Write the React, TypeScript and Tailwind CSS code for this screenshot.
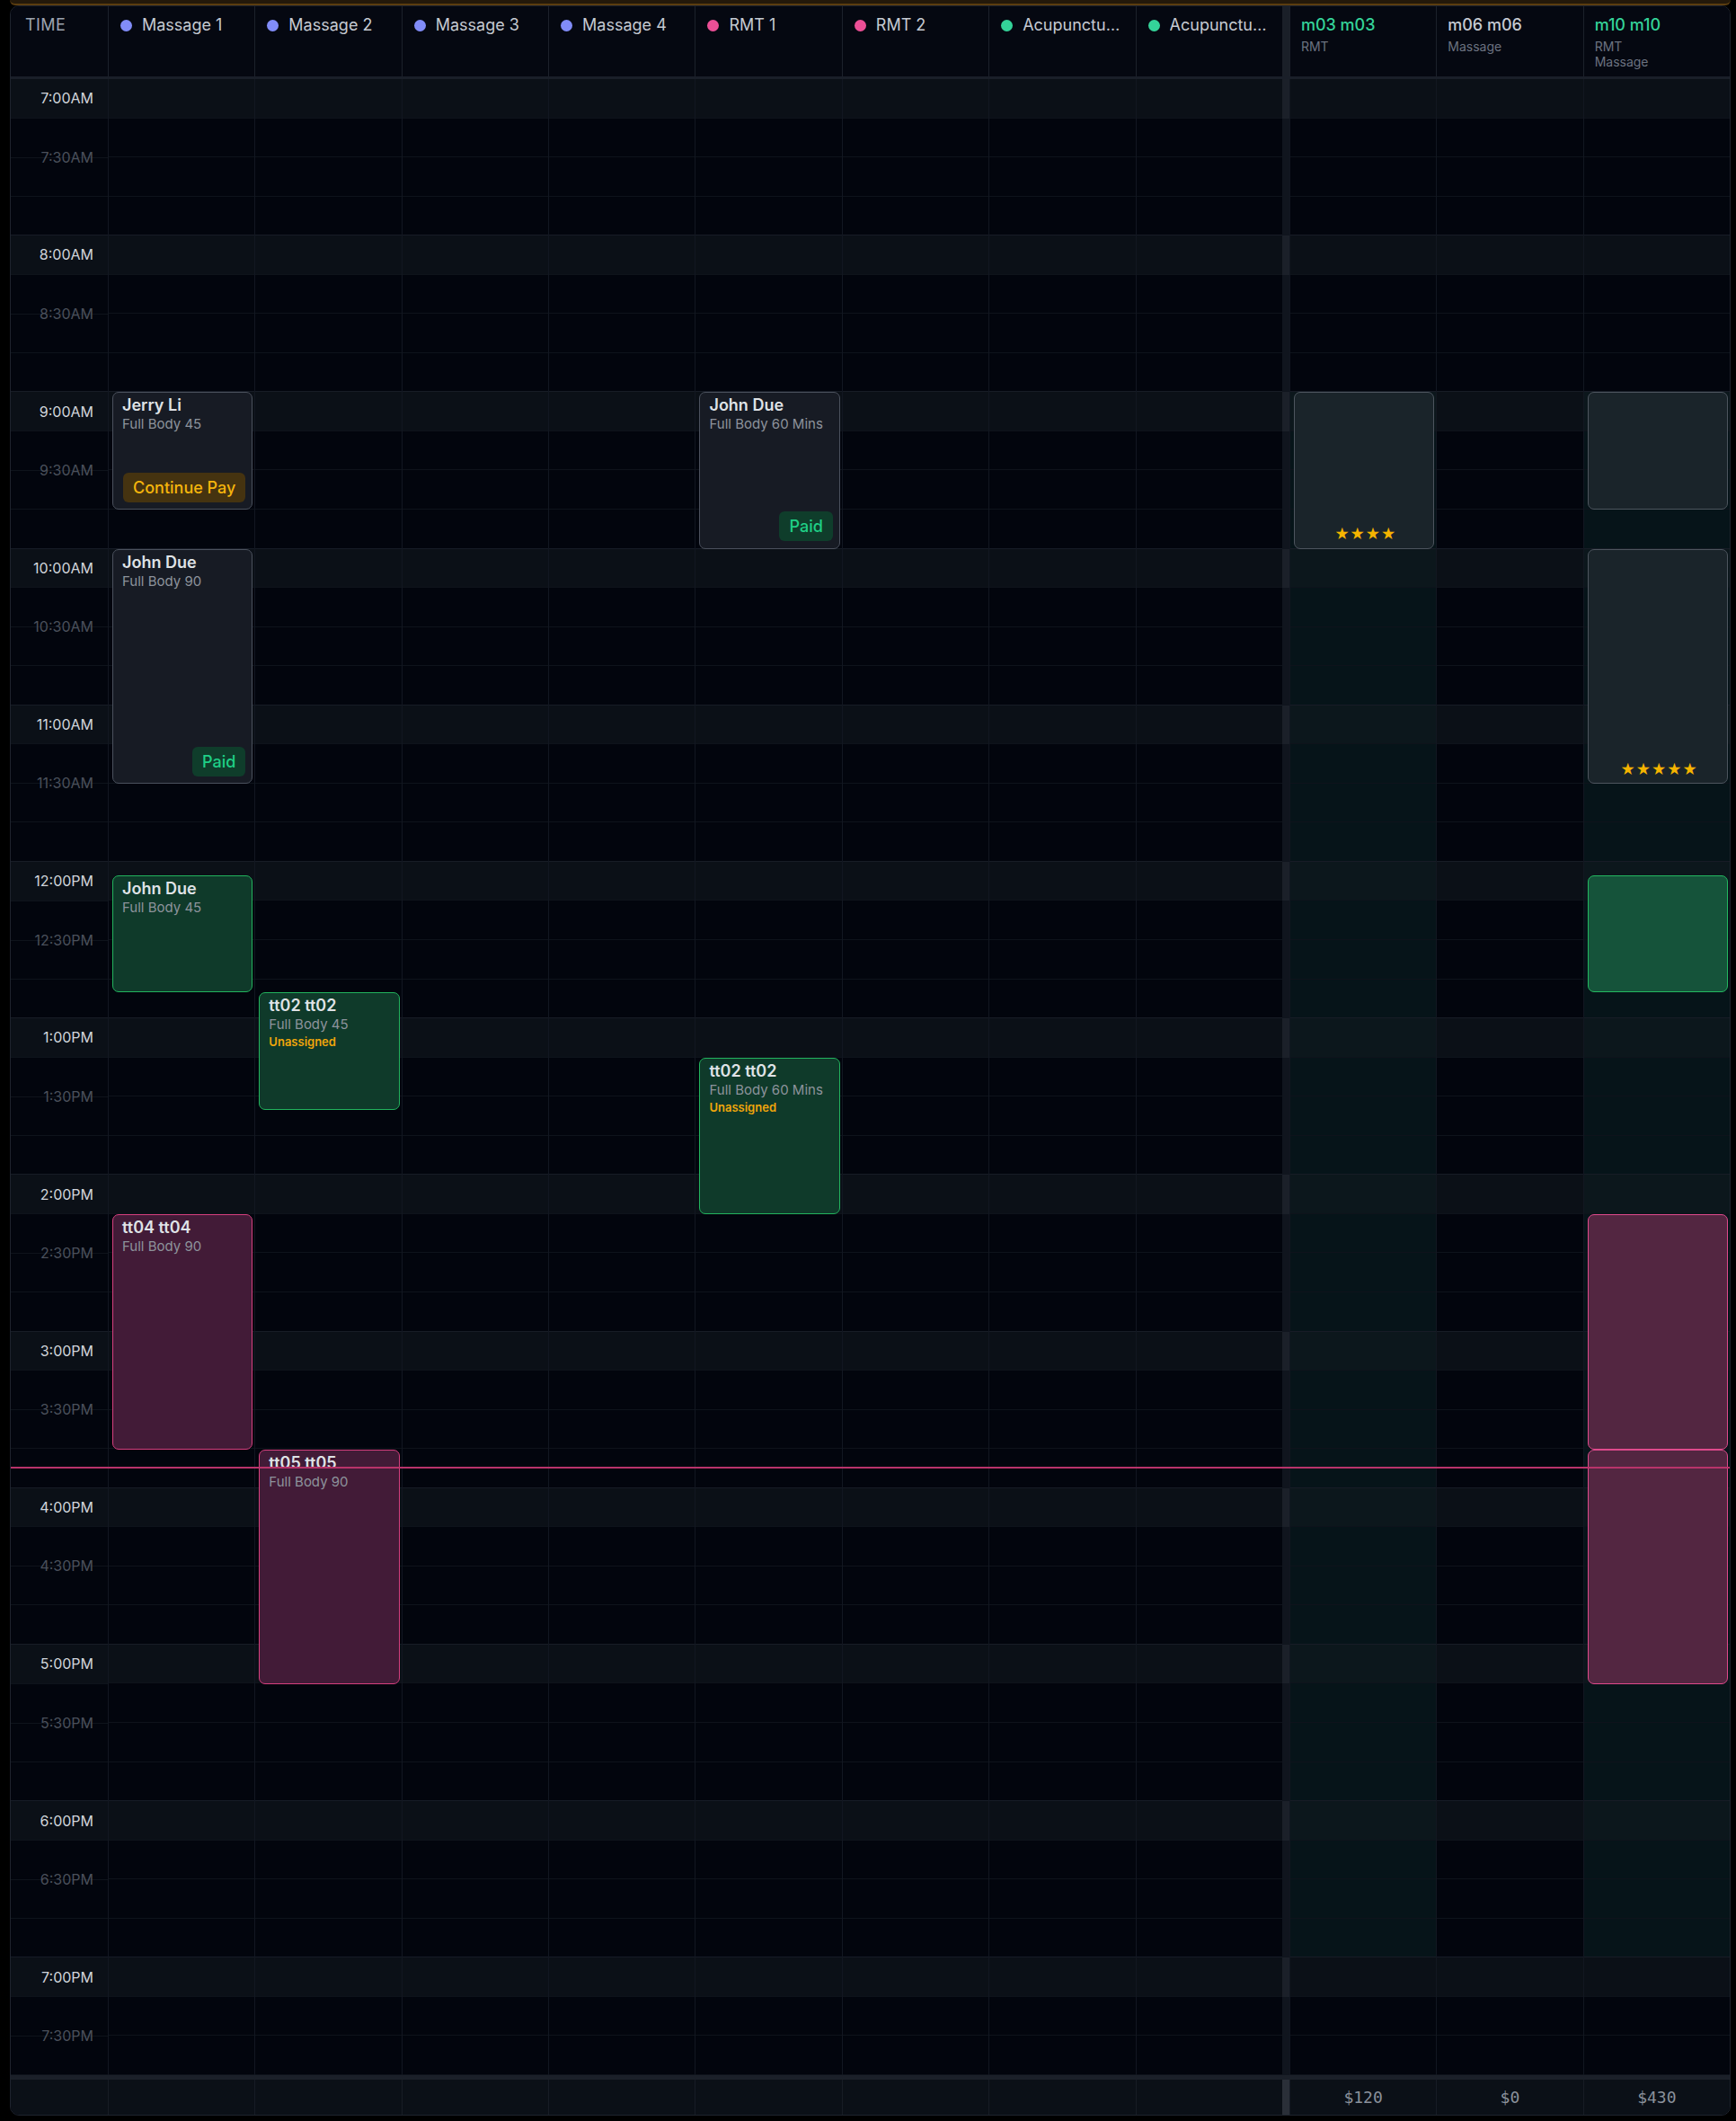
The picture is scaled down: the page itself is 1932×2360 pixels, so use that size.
import React from "react";

const SLOT = 43.56;
const NSLOTS = 51;
const yOf = (m: number) => (m / 15) * SLOT;
const t = (h: number, m = 0) => (h - 7) * 60 + m;

type Kind = "gray" | "green" | "pink" | "sgray" | "sgreen" | "spink";
type Ev = {
  start: number;
  end: number;
  kind: Kind;
  name?: string;
  sub?: string;
  unassigned?: boolean;
  badge?: "pay" | "paid";
  stars?: number;
};

const kindClass: Record<Kind, string> = {
  gray: "bg-[#171b24] border-[#4b515d]",
  green: "bg-[#0f3a2a] border-[#22b35d]",
  pink: "bg-[#421b37] border-[#d63f7e]",
  sgray: "bg-[#1a242a] border-[#4d555e]",
  sgreen: "bg-[#15533a] border-[#23b860]",
  spink: "bg-[#532641] border-[#df4a8c]",
};

const resources: { name: string; dot: string; events: Ev[] }[] = [
  {
    name: "Massage 1",
    dot: "bg-[#818cf8]",
    events: [
      { start: t(9), end: t(9, 45), kind: "gray", name: "Jerry Li", sub: "Full Body 45", badge: "pay" },
      { start: t(10), end: t(11, 30), kind: "gray", name: "John Due", sub: "Full Body 90", badge: "paid" },
      { start: t(12, 5), end: t(12, 50), kind: "green", name: "John Due", sub: "Full Body 45" },
      { start: t(14, 15), end: t(15, 45), kind: "pink", name: "tt04 tt04", sub: "Full Body 90" },
    ],
  },
  {
    name: "Massage 2",
    dot: "bg-[#818cf8]",
    events: [
      { start: t(12, 50), end: t(13, 35), kind: "green", name: "tt02 tt02", sub: "Full Body 45", unassigned: true },
      { start: t(15, 45), end: t(17, 15), kind: "pink", name: "tt05 tt05", sub: "Full Body 90" },
    ],
  },
  { name: "Massage 3", dot: "bg-[#818cf8]", events: [] },
  { name: "Massage 4", dot: "bg-[#818cf8]", events: [] },
  {
    name: "RMT 1",
    dot: "bg-[#ec4f96]",
    events: [
      { start: t(9), end: t(10), kind: "gray", name: "John Due", sub: "Full Body 60 Mins", badge: "paid" },
      { start: t(13, 15), end: t(14, 15), kind: "green", name: "tt02 tt02", sub: "Full Body 60 Mins", unassigned: true },
    ],
  },
  { name: "RMT 2", dot: "bg-[#ec4f96]", events: [] },
  { name: "Acupuncture 1", dot: "bg-[#34d399]", events: [] },
  { name: "Acupuncture 2", dot: "bg-[#34d399]", events: [] },
];

const staff: { name: string; subs: string[]; on: boolean; total: string; events: Ev[] }[] = [
  {
    name: "m03 m03",
    subs: ["RMT"],
    on: true,
    total: "$120",
    events: [{ start: t(9), end: t(10), kind: "sgray", stars: 4 }],
  },
  { name: "m06 m06", subs: ["Massage"], on: false, total: "$0", events: [] },
  {
    name: "m10 m10",
    subs: ["RMT", "Massage"],
    on: true,
    total: "$430",
    events: [
      { start: t(9), end: t(9, 45), kind: "sgray" },
      { start: t(10), end: t(11, 30), kind: "sgray", stars: 5 },
      { start: t(12, 5), end: t(12, 50), kind: "sgreen" },
      { start: t(14, 15), end: t(15, 45), kind: "spink" },
      { start: t(15, 45), end: t(17, 15), kind: "spink" },
    ],
  },
];

const GRID = "grid grid-cols-[108px_repeat(8,minmax(0,1fr))_8px_repeat(3,minmax(0,1fr))]";

function EventCard({ ev }: { ev: Ev }) {
  const top = yOf(ev.start);
  const height = yOf(ev.end) - yOf(ev.start);
  return (
    <div
      className={`absolute left-[4px] right-[2px] rounded-[7px] border-[1.5px] overflow-hidden ${kindClass[ev.kind]}`}
      style={{ top, height }}
    >
      <div className="flex h-full flex-col pl-[10px] pr-[7px] pt-[4px] pb-[7.5px]">
        {ev.name && (
          <div className="text-[18px] leading-[20px] font-semibold text-[#dfe2e6] whitespace-nowrap">{ev.name}</div>
        )}
        {ev.sub && (
          <div className="text-[15px] leading-[21px] text-[#8d939c] whitespace-nowrap">{ev.sub}</div>
        )}
        {ev.unassigned && (
          <div className="text-[13px] leading-[19px] font-semibold text-[#f0a60b]">Unassigned</div>
        )}
        {ev.badge === "pay" && (
          <div className="mt-auto flex justify-end">
            <div className="h-[33px] px-[11px] rounded-[6px] bg-[#453310] text-[#f5b50c] text-[18px] leading-[33px] font-medium whitespace-nowrap">
              Continue Pay
            </div>
          </div>
        )}
        {ev.badge === "paid" && (
          <div className="mt-auto flex justify-end">
            <div className="h-[33px] px-[11px] rounded-[6px] bg-[#0f3d2b] text-[#1fcf86] text-[18px] leading-[33px] font-medium">
              Paid
            </div>
          </div>
        )}
        {ev.stars && (
          <div className="mt-auto flex justify-center text-[16px] leading-[16px] tracking-[0.5px] text-[#f5b400]">
            {"★".repeat(ev.stars)}
          </div>
        )}
      </div>
    </div>
  );
}

function slotClass(i: number, tinted: boolean) {
  const band = i % 4 === 0;
  const hourEnd = i % 4 === 3;
  const inTint = tinted && i >= 8 && i < 48;
  let bg = "";
  if (inTint) bg = band ? "bg-[#0c171c]" : "bg-[#061419]";
  else bg = band ? "bg-[#0b1017]" : "";
  const line = hourEnd ? "border-[#171c26]" : "border-[#0e131b]";
  return `h-[43.56px] border-b ${line} ${bg}`;
}

function Column({ events, tinted }: { events: Ev[]; tinted: boolean }) {
  return (
    <div className="relative flex flex-col border-l border-[#121721]">
      {Array.from({ length: NSLOTS }).map((_, i) => (
        <div key={i} className={slotClass(i, tinted)} />
      ))}
      {events.map((ev, k) => (
        <EventCard key={k} ev={ev} />
      ))}
    </div>
  );
}

function SepColumn() {
  return (
    <div className="flex flex-col">
      {Array.from({ length: NSLOTS }).map((_, i) => (
        <div key={i} className={`h-[43.56px] ${i % 4 === 0 ? "bg-[#1b2029]" : "bg-[#10151e]"}`} />
      ))}
    </div>
  );
}

function fmt(h: number, half: boolean) {
  const suffix = h >= 12 ? "PM" : "AM";
  const hh = h > 12 ? h - 12 : h;
  return `${hh}:${half ? "30" : "00"}${suffix}`;
}

function TimeColumn() {
  const hours = Array.from({ length: 13 }, (_, i) => 7 + i);
  return (
    <div className="flex flex-col">
      {hours.map((h) => {
        const last = h === 19;
        return (
          <div key={h} className="flex flex-col">
            <div className="h-[43.56px] bg-[#0b1017] border-b border-[#0e131b] flex items-center justify-end pr-[16px] text-[16px] text-[#d1d5db]">
              {fmt(h, false)}
            </div>
            <div className="h-[87.12px] border-b border-[#0e131b] flex items-center justify-end pr-[16px] text-[16px] text-[#4a505b] bg-[linear-gradient(to_bottom,transparent_42.56px,#0e131b_42.56px,#0e131b_43.56px,transparent_43.56px)]">
              {fmt(h, true)}
            </div>
            {!last && <div className="h-[43.56px] border-b border-[#171c26]" />}
          </div>
        );
      })}
    </div>
  );
}

export default function App() {
  const nowTop = yOf(t(15, 52));
  return (
    <div className="w-[1932px] h-[2360px] bg-black font-['Inter',sans-serif]">
      <div className="ml-[11px] w-[1915px] h-[6px] bg-[#24190a] border-b-2 border-[#5b3d10] rounded-b-[8px]" />
      <div className="ml-[11px] w-[1915px] border border-[#1e232d] rounded-[10px] overflow-hidden bg-[#02050d]">
        {/* Header */}
        <div className={`${GRID} h-[81px] border-b-[3px] border-[#1a1f29] bg-[#050811]`}>
          <div className="pl-[16px] pt-[9px] text-[18px] leading-[24px] tracking-wide text-[#9ca3af]">TIME</div>
          {resources.map((r) => (
            <div key={r.name} className="flex items-start gap-[11px] border-l border-[#1c212b] pl-[13px] pr-[16px] pt-[9px] min-w-0">
              <span className={`mt-[5.5px] h-[13px] w-[13px] shrink-0 rounded-full ${r.dot}`} />
              <span className="truncate text-[18px] leading-[24px] text-[#c5cad2]">{r.name}</span>
            </div>
          ))}
          <div className="bg-[#1a1f28]" />
          {staff.map((s) => (
            <div key={s.name} className="flex flex-col border-l border-[#1c212b] pl-[12px] pt-[9px]">
              <span className={`text-[18px] leading-[24px] font-medium ${s.on ? "text-[#34d399]" : "text-[#c5cad2]"}`}>
                {s.name}
              </span>
              <div className="mt-[3px] flex flex-col">
                {s.subs.map((x) => (
                  <span key={x} className="text-[14px] leading-[17px] text-[#6b7280]">
                    {x}
                  </span>
                ))}
              </div>
            </div>
          ))}
        </div>

        {/* Body */}
        <div className={`${GRID} relative`}>
          <TimeColumn />
          {resources.map((r) => (
            <Column key={r.name} events={r.events} tinted={false} />
          ))}
          <SepColumn />
          {staff.map((s) => (
            <Column key={s.name} events={s.events} tinted={s.on} />
          ))}
          <div
            className="absolute left-0 right-0 z-10 h-[2px] bg-[#b9336a] pointer-events-none"
            style={{ top: nowTop - 1 }}
          />
        </div>

        {/* Footer */}
        <div className={`${GRID} h-[44px] border-t-[5px] border-[#1b2029] bg-[#0b1017]`}>
          <div />
          {resources.map((r) => (
            <div key={r.name} className="border-l border-[#171c25]" />
          ))}
          <div className="bg-[#2a2f38]" />
          {staff.map((s) => (
            <div
              key={s.name}
              className="flex items-center justify-center border-l border-[#171c25] font-['DejaVu_Sans_Mono',monospace] text-[18px] text-[#8a919b]"
            >
              {s.total}
            </div>
          ))}
        </div>
      </div>
    </div>
  );
}
